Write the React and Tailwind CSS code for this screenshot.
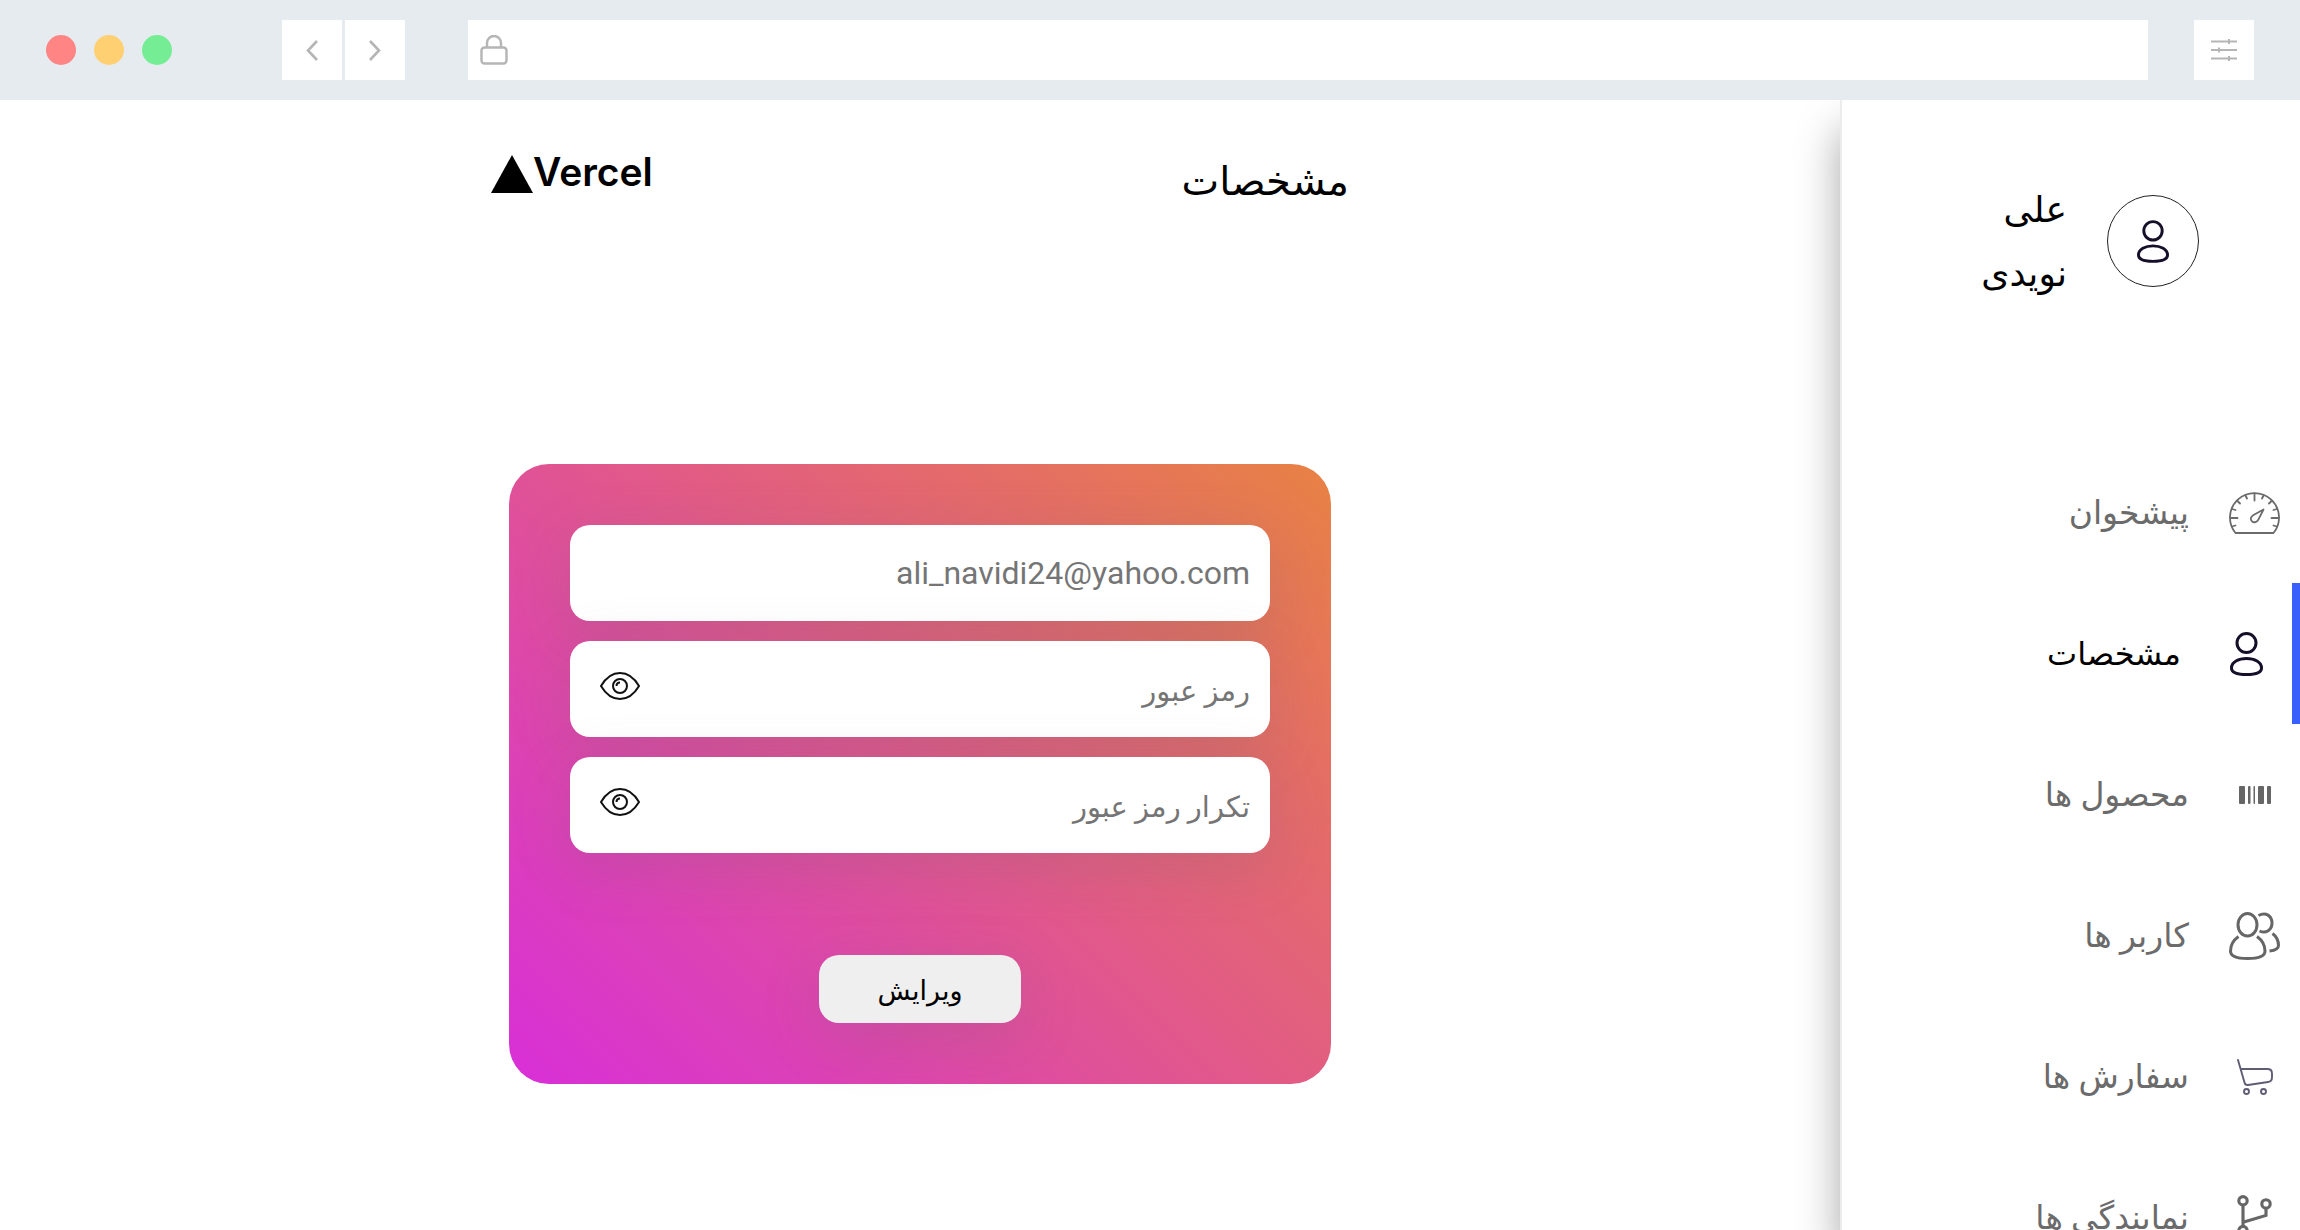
import React from "react";

const FA = "font-['Roboto','DejaVu_Sans',sans-serif]";

function UserIcon({ className }) {
  return (
    <svg viewBox="0 0 33 44" className={className} fill="none" stroke="#160f29" strokeWidth="3" aria-hidden="true">
      <circle cx="16.5" cy="11" r="9.5" />
      <path d="M1.5 36c0-6 7-9.500 15-9.500s15 3.500 15 9.500c0 5-7 6.500-15 6.500s-15-1.500-15-6.500z" />
    </svg>
  );
}

function GaugeIcon() {
  return (
    <svg viewBox="0 0 51 42" className="w-[51px] h-[42px]" fill="none" stroke="#6b6b6b" strokeWidth="1.800" strokeLinecap="round" aria-hidden="true">
      <path d="M6.500 41A24.500 24.500 0 1 1 44.500 41z" strokeLinejoin="round" />
      <path d="M25.500 1.500v7M1.500 26h7M42.500 26h7M16.500 3.500l1.500 3M34.500 3.500l-1.500 3M8.500 9l2.500 2.500M42.500 9L40 11.500M3 17l3.500 1M48 17l-3.500 1M3 34.500l3.500-1M48 34.500l-3.500-1" />
      <path d="M34.500 17.500l-10 5.500c-3 1.800-3.500 4.500-1.500 6.300s5 1 6.500-2z" strokeLinejoin="round" />
    </svg>
  );
}

function BarcodeIcon() {
  return (
    <svg viewBox="0 0 32 18" className="w-[32px] h-[18px]" fill="#666" aria-hidden="true">
      <rect x="0" width="6" height="18" rx="1" />
      <rect x="9" width="2.500" height="18" rx="1" />
      <rect x="14.500" width="1.500" height="18" rx="0.700" />
      <rect x="19" width="6" height="18" rx="1" />
      <rect x="28" width="4" height="18" rx="1" />
    </svg>
  );
}

function UsersIcon() {
  return (
    <svg viewBox="0 0 51 48" className="w-[51px] h-[48px]" fill="none" stroke="#666" strokeWidth="3" aria-hidden="true">
      <ellipse cx="18.500" cy="12.800" rx="9.500" ry="11.200" />
      <path d="M9.500 24.500C4 28.500 1.500 34 1.500 39c0 5 6.500 7.500 17 7.500S36 44 36 39c0-5-2.500-10.500-8-14.500" />
      <path d="M29.500 3.500C37 -0.500 43 4 43 11s-6 11-12.500 8" />
      <path d="M43.500 21.500c4 3 6 7.500 6 12 0 3-2.500 4.800-9 5.500" />
    </svg>
  );
}

function CartIcon() {
  return (
    <svg viewBox="0 0 36 36" className="w-[36px] h-[36px]" fill="none" stroke="#5f5d74" strokeWidth="1.900" strokeLinecap="round" strokeLinejoin="round" aria-hidden="true">
      <path d="M1 1l6.500 22.500c.5 2 1.500 2.800 3.500 2.500l20-3c3-.5 4-2 4-4.500v-4c0-3-1.500-4.500-4.500-4.500H4" />
      <circle cx="9.500" cy="32.500" r="2.500" />
      <circle cx="26.500" cy="32.500" r="2.500" />
    </svg>
  );
}

function BranchIcon() {
  return (
    <svg viewBox="0 0 33 44" className="w-[35px] h-[46px]" fill="none" stroke="#666" strokeWidth="3" aria-hidden="true">
      <circle cx="5.500" cy="5.500" r="4" />
      <circle cx="27.500" cy="8.500" r="4" />
      <circle cx="5.500" cy="34" r="4" />
      <path d="M5.500 9.500V30M27.500 12.500V19.500L5.500 26" />
    </svg>
  );
}

function EyeIcon() {
  return (
    <svg viewBox="0 0 40 28" className="w-10 h-7" fill="none" stroke="#111" strokeWidth="2" aria-hidden="true">
      <path d="M1 14C6 5.500 12 1 20 1s14 4.500 19 13c-5 8.500-11 13-19 13S6 22.500 1 14z" strokeLinejoin="round" />
      <circle cx="20" cy="14" r="7" />
      <path d="M16.500 14c0-2 1.500-3.500 3.500-3.500" />
    </svg>
  );
}

function Chevron({ d }) {
  return (
    <svg viewBox="0 0 12 21" className="w-3 h-[21px]" fill="none" stroke="#b5b5b5" strokeWidth="2.600" aria-hidden="true">
      <path d={d} />
    </svg>
  );
}

function BrowserBar() {
  return (
    <header dir="ltr" className="flex h-[100px] shrink-0 items-center bg-[#e6ebef] px-[46px]">
      <div className="flex gap-[18px]">
        <span className="size-[30px] rounded-full bg-[#ff8585]" />
        <span className="size-[30px] rounded-full bg-[#ffd071]" />
        <span className="size-[30px] rounded-full bg-[#74ed94]" />
      </div>
      <div className="ml-[110px] flex gap-[3px]">
        <button type="button" aria-label="Back" className="flex size-[60px] items-center justify-center bg-white">
          <Chevron d="M11 1L2 10.500 11 20" />
        </button>
        <button type="button" aria-label="Forward" className="flex size-[60px] items-center justify-center bg-white">
          <Chevron d="M1 1l9 9.500L1 20" />
        </button>
      </div>
      <label className="ml-[63px] flex h-[60px] flex-1 items-center bg-white pl-3">
        <svg viewBox="0 0 28 30" className="h-[30px] w-7" fill="none" stroke="#b5b5b5" strokeWidth="2.400" aria-hidden="true">
          <rect x="1.500" y="12.500" width="25" height="16" rx="3" />
          <path d="M7 12.500V8a7 7 0 0 1 14 0v4.500" />
        </svg>
        <input type="text" aria-label="Address" className="h-full flex-1 px-3 outline-none" />
      </label>
      <button type="button" aria-label="Settings" className="ml-[46px] flex size-[60px] items-center justify-center bg-white">
        <svg viewBox="0 0 26 22" className="h-[22px] w-[26px]" stroke="#b5b5b5" strokeWidth="2" aria-hidden="true">
          <path d="M0 2.500h26M0 11h26M0 19.500h26M18 0v5M8 8.500v5M18 17v5" />
        </svg>
      </button>
    </header>
  );
}

const items = [
  { label: "پیشخوان", icon: <GaugeIcon /> },
  { label: "مشخصات", icon: <UserIcon className="h-[44px] w-[33px]" />, active: true },
  { label: "محصول ها", icon: <BarcodeIcon /> },
  { label: "کاربر ها", icon: <UsersIcon /> },
  { label: "سفارش ها", icon: <CartIcon /> },
  { label: "نمایندگی ها", icon: <BranchIcon /> },
];

function Sidebar() {
  return (
    <aside className="w-1/5 shrink-0 border-l-2 border-[#ececec] bg-white shadow-[0_30px_40px_rgba(0,0,0,0.35)]">
      <div className="flex h-[342px] items-start gap-10 pr-[101px] pt-[78px]">
        <div className="mt-[17px] flex size-[92px] shrink-0 items-center justify-center rounded-full border border-[#222]">
          <UserIcon className="h-[43px] w-8" />
        </div>
        <p className="w-24 text-[36px] leading-[64px] text-black">علی نویدی</p>
      </div>
      <nav>
        <ul>
          {items.map((item) => (
            <li key={item.label}>
              <a
                href="#"
                aria-current={item.active ? "page" : undefined}
                className={
                  item.active
                    ? "flex h-[141px] items-center gap-8 border-r-8 border-[#3960fb] pr-3 text-[32px] text-black"
                    : "flex h-[141px] items-center gap-8 pr-3 text-[33px] text-[#6b6b6b]"
                }
              >
                <span className="flex w-[67px] justify-center">{item.icon}</span>
                <span>{item.label}</span>
              </a>
            </li>
          ))}
        </ul>
      </nav>
    </aside>
  );
}

function Field({ type, label, eye }) {
  return (
    <div className="relative">
      <input
        type={type}
        placeholder={label}
        aria-label={label}
        className={
          eye
            ? "block h-[96px] w-full rounded-[20px] bg-white px-5 pt-1 text-right text-[29px] shadow-[0_15px_60px_rgba(100,100,111,0.2)] outline-none placeholder:text-[#757575] placeholder:opacity-100"
            : "block h-[96px] w-full rounded-[20px] bg-white px-5 text-right text-[32px] shadow-[0_15px_60px_rgba(100,100,111,0.2)] outline-none placeholder:text-[#757575] placeholder:opacity-100"
        }
      />
      {eye && (
        <button type="button" aria-label="نمایش رمز عبور" className="absolute left-[30px] top-[31px]">
          <EyeIcon />
        </button>
      )}
    </div>
  );
}

export default function App() {
  return (
    <div dir="rtl" className={`flex h-screen flex-col overflow-hidden bg-white ${FA}`}>
      <BrowserBar />
      <div className="flex min-h-0 flex-1 overflow-hidden">
        <Sidebar />
        <main className="flex flex-1 flex-col items-center">
          <div className="flex w-[858px] items-start justify-between pt-[50px]">
            <h1 className="text-[40px] leading-[64px] text-black">مشخصات</h1>
            <div dir="ltr" className="flex h-11 items-center">
              <svg viewBox="0 0 42 38" className="mt-1 h-[38px] w-[42px]" aria-hidden="true">
                <path d="M21 0l21 38H0z" />
              </svg>
              <span className="font-['Inter',sans-serif] text-[39px] font-semibold leading-10">Vercel</span>
            </div>
          </div>
          <form className="mt-[250px] w-[822px] rounded-[40px] bg-[linear-gradient(45deg,#d82fd8,#e25c84_55%,#e46c68_75%,#e88244)] px-[61px] pb-[61px] pt-[61px]">
            <div className="flex flex-col gap-5">
              <Field type="email" label="ali_navidi24@yahoo.com" />
              <Field type="password" label="رمز عبور" eye />
              <Field type="password" label="تکرار رمز عبور" eye />
            </div>
            <button type="submit" className="mx-auto mt-[102px] block h-[68px] w-[202px] rounded-[20px] bg-[#efefef] pt-1 text-[27px] text-black shadow-[0_15px_60px_rgba(100,100,111,0.2)]">
              ویرایش
            </button>
          </form>
        </main>
      </div>
    </div>
  );
}
